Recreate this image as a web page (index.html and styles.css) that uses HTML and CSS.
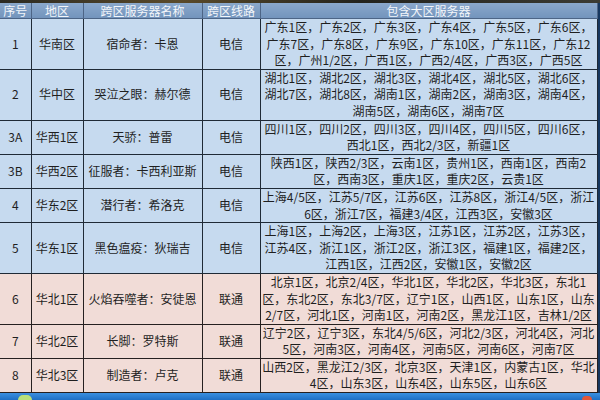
FILE: index.html
```html
<!DOCTYPE html>
<html lang="zh">
<head>
<meta charset="utf-8">
<link rel="stylesheet" href="styles.css">
</head>
<body>
<div class="screen">
  <div class="topband"></div>
  <table class="servers">
    <colgroup>
      <col class="c-no"><col class="c-area"><col class="c-name"><col class="c-line"><col class="c-list">
    </colgroup>
    <thead>
      <tr><th>序号</th><th>地区</th><th>跨区服务器名称</th><th>跨区线路</th><th>包含大区服务器</th></tr>
    </thead>
    <tbody>
      <tr class="blue r3">
        <td>1</td><td>华南区</td><td>宿命者：卡恩</td><td>电信</td>
        <td class="list">广东1区，广东2区，广东3区，广东4区，广东5区，广东6区，<br>广东7区，广东8区，广东9区，广东10区，广东11区，广东12<br>区，广州1/2区，广西1区，广西2/4区，广西3区，广西5区</td>
      </tr>
      <tr class="blue r3">
        <td>2</td><td>华中区</td><td>哭泣之眼：赫尔德</td><td>电信</td>
        <td class="list">湖北1区，湖北2区，湖北3区，湖北4区，湖北5区，湖北6区，<br>湖北7区，湖北8区，湖南1区，湖南2区，湖南3区，湖南4区，<br>湖南5区，湖南6区，湖南7区</td>
      </tr>
      <tr class="blue r2">
        <td>3A</td><td>华西1区</td><td>天骄：普雷</td><td>电信</td>
        <td class="list">四川1区，四川2区，四川3区，四川4区，四川5区，四川6区，<br>西北1区，西北2/3区，新疆1区</td>
      </tr>
      <tr class="blue r2">
        <td>3B</td><td>华西2区</td><td>征服者：卡西利亚斯</td><td>电信</td>
        <td class="list">陕西1区，陕西2/3区，云南1区，贵州1区，西南1区，西南2<br>区，西南3区，重庆1区，重庆2区，云贵1区</td>
      </tr>
      <tr class="blue r2">
        <td>4</td><td>华东2区</td><td>潜行者：希洛克</td><td>电信</td>
        <td class="list">上海4/5区，江苏5/7区，江苏6区，江苏8区，浙江4/5区，浙江<br>6区，浙江7区，福建3/4区，江西3区，安徽3区</td>
      </tr>
      <tr class="blue r3">
        <td>5</td><td>华东1区</td><td>黑色瘟疫：狄瑞吉</td><td>电信</td>
        <td class="list">上海1区，上海2区，上海3区，江苏1区，江苏2区，江苏3区，<br>江苏4区，浙江1区，浙江2区，浙江3区，福建1区，福建2区，<br>江西1区，江西2区，安徽1区，安徽2区</td>
      </tr>
      <tr class="pink r3">
        <td>6</td><td>华北1区</td><td>火焰吞噬者：安徒恩</td><td>联通</td>
        <td class="list">北京1区，北京2/4区，华北1区，华北2区，华北3区，东北1<br>区，东北2区，东北3/7区，辽宁1区，山西1区，山东1区，山东<br>2/7区，河北1区，河南1区，河南2区，黑龙江1区，吉林1/2区</td>
      </tr>
      <tr class="pink r2">
        <td>7</td><td>华北2区</td><td>长脚：罗特斯</td><td>联通</td>
        <td class="list">辽宁2区，辽宁3区，东北4/5/6区，河北2/3区，河北4区，河北<br>5区，河南3区，河南4区，河南5区，河南6区，河南7区</td>
      </tr>
      <tr class="pink r2">
        <td>8</td><td>华北3区</td><td>制造者：卢克</td><td>联通</td>
        <td class="list">山西2区，黑龙江2/3区，北京3区，天津1区，内蒙古1区，华北<br>4区，山东3区，山东4区，山东5区，山东6区</td>
      </tr>
    </tbody>
  </table>
  <div class="taskbar">
    <span class="orb"></span>
    <span class="tray"></span>
  </div>
</div>
</body>
</html>
```

FILE: styles.css
```css
html, body {
  margin: 0;
  padding: 0;
}
body {
  width: 600px;
  height: 400px;
  overflow: hidden;
  background: #1b4f8f;
  font-family: "Noto Sans CJK SC", "Noto Sans", sans-serif;
}
.screen {
  display: flex;
  flex-direction: column;
  width: 600px;
  height: 400px;
  background: linear-gradient(90deg, #1d3f6e, #2a5a94 60%, #17375f);
}
.topband {
  height: 3px;
  background: linear-gradient(90deg, #2b2a22, #5a4a2a 30%, #23231d 60%, #3b3b33);
}
.servers {
  border-collapse: collapse;
  table-layout: fixed;
  width: 597px;
  font-size: 12px;
  color: #1f1f1f;
}
.c-no { width: 31px; }
.c-area { width: 52px; }
.c-name { width: 119px; }
.c-line { width: 58px; }
.c-list { width: 337px; }
.servers th {
  height: 15px;
  padding: 0;
  line-height: 15px;
  font-weight: normal;
  color: #f3f6fa;
  background: linear-gradient(#8aa8cb, #7394bc);
  border: 1px solid #4d6586;
  border-top: none;
  text-align: center;
}
.servers th:first-child,
.servers td:first-child {
  border-left: none;
}
.servers td {
  padding: 0;
  border: 1px solid #1f2a36;
  text-align: center;
  vertical-align: middle;
  line-height: 16.6px;
  white-space: nowrap;
  overflow: hidden;
}
.servers td.list {
  padding: 0 1px;
  vertical-align: top;
}
.r3 td { height: 49px; }
.r2 td { height: 33px; }
.blue td { background: #c6daef; }
.pink td { background: #f1dcd7; }
.pink td { border-color: #262020; }
.taskbar {
  flex: 1;
  display: flex;
  justify-content: space-between;
  align-items: flex-end;
  background: linear-gradient(#3a8fe0, #1f6fc4);
  padding: 0 8px 0 18px;
}
.orb {
  width: 14px;
  height: 5px;
  border-radius: 7px 7px 0 0;
  background: #b9e07a;
}
.tray {
  width: 10px;
  height: 4px;
  border-radius: 5px 5px 0 0;
  background: #e2573a;
}
```
